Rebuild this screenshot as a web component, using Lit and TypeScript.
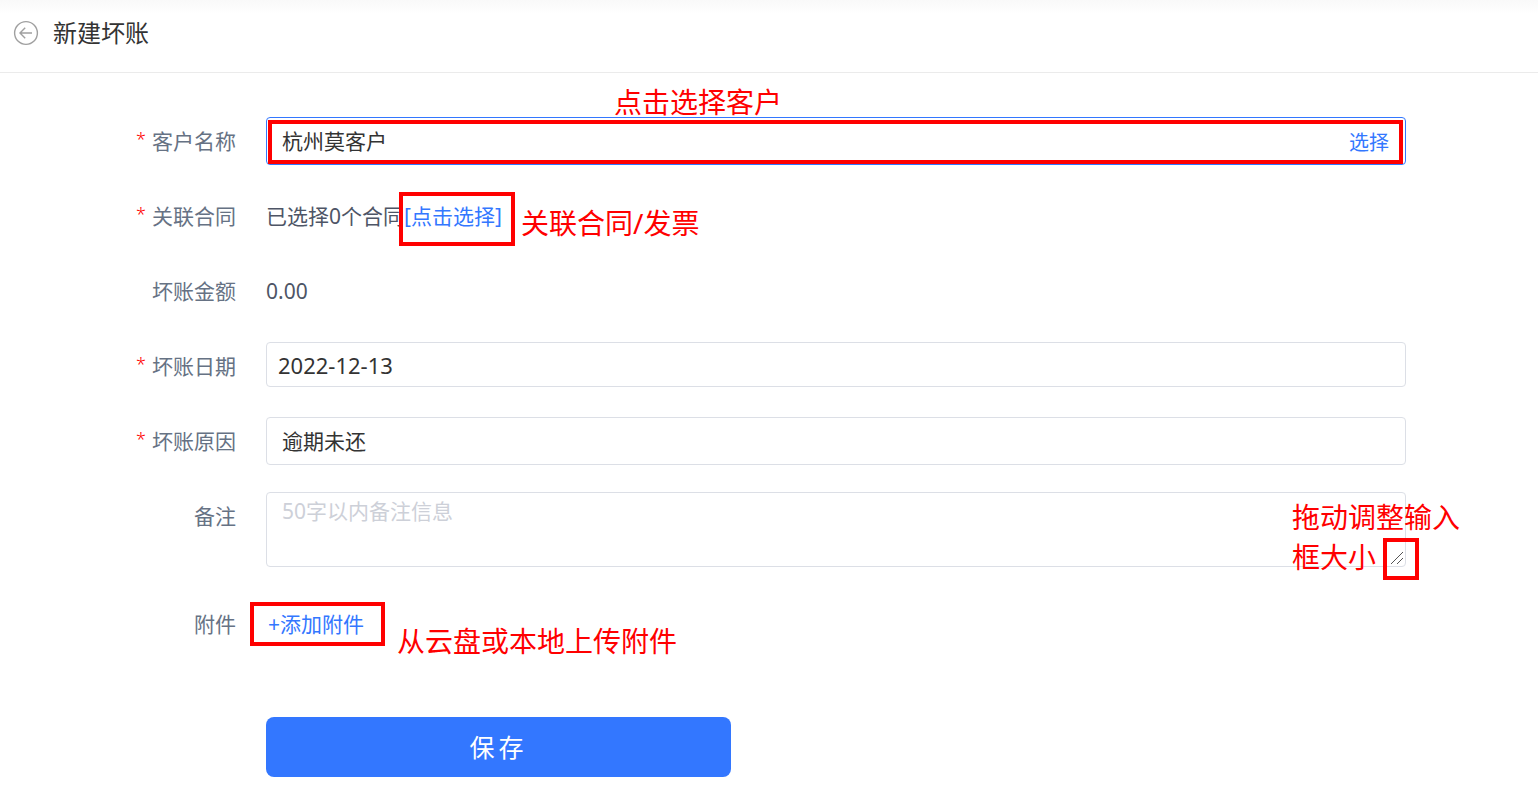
import { LitElement, html, css } from "lit";
import { customElement, state } from "lit/decorators.js";

@customElement("app-root")
export class AppRoot extends LitElement {
  static styles = css`
    :host {
      display: block;
      min-height: 100vh;
      background: #fff;
      color: #333;
      font-family: "Noto Sans", "Noto Sans CJK SC", sans-serif;
      font-size: 21px;
      font-weight: 400;
      line-height: 48px;
    }
    * {
      box-sizing: border-box;
    }
    input,
    textarea,
    button {
      margin: 0;
      font: inherit;
      color: inherit;
    }
    .header {
      display: flex;
      align-items: center;
      gap: 14px;
      padding: 9px 13px 15px;
      border-bottom: 1px solid #ebebeb;
      background: linear-gradient(#f9f9f9, #fff 14px);
    }
    .back {
      display: flex;
      padding: 0;
      border: 0;
      background: none;
      cursor: pointer;
    }
    .title {
      margin: 0;
      font-size: 24px;
      font-weight: 400;
    }
    .form {
      display: flex;
      flex-direction: column;
      gap: 27px;
      padding: 44px 132px 18px;
    }
    .row {
      display: grid;
      grid-template-columns: 104px minmax(0, 1fr);
      grid-template-rows: minmax(48px, auto);
      column-gap: 30px;
    }
    .label {
      height: 48px;
      color: #667284;
      text-align: right;
      white-space: nowrap;
    }
    .star {
      margin-right: 6px;
      color: #f00;
      font-size: 18px;
      font-weight: 300;
      line-height: 1;
      vertical-align: 3px;
    }
    .field {
      position: relative;
      color: #4e5566;
    }
    .text {
      height: 48px;
    }
    .box {
      display: block;
      width: 100%;
      border: 1px solid #dcdfe6;
      border-radius: 4px;
      background: #fff;
      color: #333;
      outline: none;
    }
    .line {
      height: 48px;
      padding: 0 15px;
    }
    .date {
      height: 45px;
      padding: 0 11px;
      font-size: 22px;
    }
    .picker {
      display: flex;
      align-items: center;
      padding-right: 16px;
      border-color: #37f;
      height: 48px;
    }
    .picker-input {
      flex: 1;
      min-width: 0;
      height: 44px;
      padding: 0 15px;
      border: 0;
      background: none;
      outline: none;
    }
    .area {
      height: 75px;
      margin-bottom: 6px;
      padding: 2px 15px;
      line-height: 32px;
      resize: vertical;
    }
    .area::placeholder {
      color: #cdd0d8;
      opacity: 1;
    }
    .area::-webkit-resizer {
      background: transparent;
    }
    .grip {
      position: absolute;
      top: 59px;
      right: 2px;
      pointer-events: none;
    }
    .link {
      padding: 0;
      border: 0;
      background: none;
      color: #37f;
      cursor: pointer;
    }
    .small {
      padding-top: 4px;
      font-size: 20px;
    }
    .add {
      padding-left: 2px;
    }
    .actions {
      padding-top: 42px;
    }
    .save {
      display: block;
      width: 465px;
      max-width: 100%;
      height: 60px;
      border: 0;
      border-radius: 8px;
      background: #37f;
      color: #fff;
      font-size: 25px;
      letter-spacing: 4px;
      cursor: pointer;
    }
    .frame {
      position: absolute;
      border: 4px solid #f00;
      pointer-events: none;
    }
    .note {
      position: absolute;
      color: #f00;
      font-size: 28px;
      line-height: 40px;
      white-space: nowrap;
      pointer-events: none;
    }
    .frame-customer {
      inset: 3px 3px 1px 2px;
    }
    .note-customer {
      top: -35px;
      left: 348px;
    }
    .frame-contract {
      top: 0;
      left: 133px;
      width: 116px;
      height: 54px;
    }
    .note-contract {
      top: 11px;
      left: 255px;
    }
    .frame-resize {
      top: 46px;
      right: -13px;
      width: 36px;
      height: 42px;
    }
    .note-resize {
      top: 5px;
      right: -54px;
    }
    .frame-upload {
      top: 2px;
      left: -16px;
      width: 135px;
      height: 44px;
    }
    .note-upload {
      top: 21px;
      left: 131px;
    }
  `;

  @state() private customer = "杭州莫客户";
  @state() private date = "2022-12-13";
  @state() private reason = "逾期未还";

  private star() {
    return html`<span class="star">*</span>`;
  }

  render() {
    return html`
      <header class="header">
        <button class="back" type="button" aria-label="返回">
          <svg width="26" height="26" viewBox="0 0 26 26" fill="none" stroke="#a0a0a0" stroke-width="1.4">
            <circle cx="13" cy="13" r="11.4" />
            <path d="M19 13H7.2M12.2 7.8L7 13l5.2 5.2" />
          </svg>
        </button>
        <h1 class="title">新建坏账</h1>
      </header>
      <form class="form" @submit=${(e: Event) => e.preventDefault()}>
        <div class="row">
          <label class="label" for="customer">${this.star()}客户名称</label>
          <div class="field">
            <div class="box picker">
              <input class="picker-input" id="customer" type="text" .value=${this.customer} />
              <button class="link small" type="button">选择</button>
            </div>
            <div class="frame frame-customer"></div>
            <div class="note note-customer">点击选择客户</div>
          </div>
        </div>
        <div class="row">
          <div class="label">${this.star()}关联合同</div>
          <div class="field text">
            已选择0个合同<button class="link" type="button">[点击选择]</button>
            <div class="frame frame-contract"></div>
            <div class="note note-contract">关联合同/发票</div>
          </div>
        </div>
        <div class="row">
          <div class="label">坏账金额</div>
          <div class="field text">0.00</div>
        </div>
        <div class="row">
          <label class="label" for="date">${this.star()}坏账日期</label>
          <div class="field">
            <input class="box date" id="date" type="text" .value=${this.date} />
          </div>
        </div>
        <div class="row">
          <label class="label" for="reason">${this.star()}坏账原因</label>
          <div class="field">
            <input class="box line" id="reason" type="text" .value=${this.reason} />
          </div>
        </div>
        <div class="row">
          <label class="label" for="remark">备注</label>
          <div class="field">
            <textarea class="box area" id="remark" placeholder="50字以内备注信息"></textarea>
            <svg class="grip" width="14" height="14" viewBox="0 0 14 14" fill="none" stroke="#555">
              <path d="M1 13L13 1M7 13L13 7" />
            </svg>
            <div class="note note-resize">拖动调整输入<br />框大小</div>
            <div class="frame frame-resize"></div>
          </div>
        </div>
        <div class="row">
          <div class="label">附件</div>
          <div class="field text">
            <button class="link add" type="button">+添加附件</button>
            <div class="frame frame-upload"></div>
            <div class="note note-upload">从云盘或本地上传附件</div>
          </div>
        </div>
        <div class="row actions">
          <span></span>
          <button class="save" type="submit">保存</button>
        </div>
      </form>
    `;
  }
}
